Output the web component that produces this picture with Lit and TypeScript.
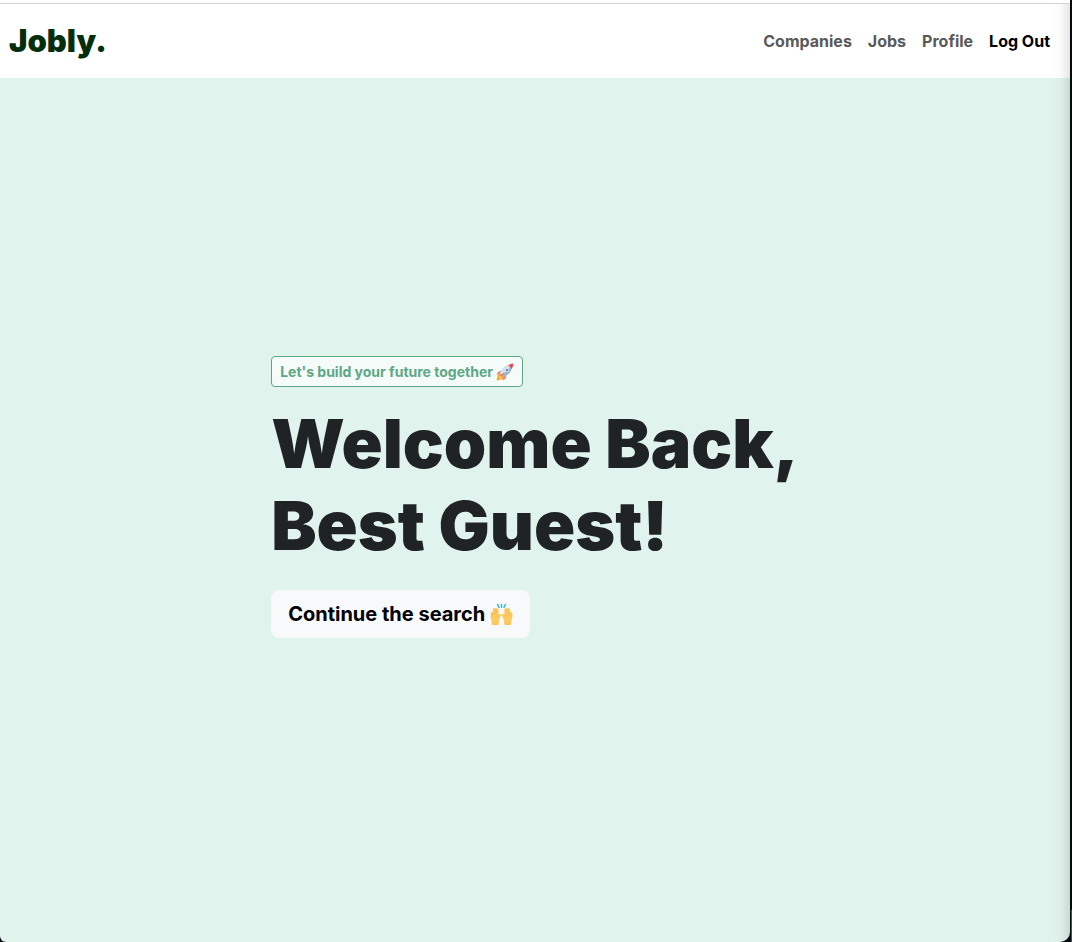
import { LitElement, html, css, svg } from "lit";
import { customElement } from "lit/decorators.js";

const rocket = svg`
  <path fill="#f7a12c" d="M1 31 3 22Q5 18 9 20L12 23Q14 27 10 29Z"/>
  <path fill="#ffd84d" d="M4 28 6 23Q8 21 10 24Q10 26 8 27Z"/>
  <path fill="#ed8b7c" d="M11 14 6 14Q2 16 1 21L8 20ZM18 21 18 26Q16 30 12 31L12 24Z"/>
  <path fill="#a3b3bf" d="M7 18Q12 7 23 3L29 9Q25 20 14 25Z"/>
  <path fill="#d5e2ea" d="M7 18Q12 7 23 3L26 6Q19 15 10 21Z"/>
  <path fill="#e8474e" d="M22 4Q26 1 31 1Q31 6 28 10Z"/>
  <circle cx="19.500" cy="12.500" r="3.400" fill="#e8f3fa"/>
  <circle cx="19.500" cy="12.500" r="2.300" fill="#4b95c6"/>
  <path stroke="#e8604f" stroke-width="2" stroke-linecap="round" d="M9 23 13 19"/>`;

const hand = svg`
  <path fill="#fbcb62" d="M1 14Q1 12 2 12Q3 12 3.500 14L4 9Q4 7 5.200 7Q6.300 7 6.500 8.500Q6.800 6.500 8 6.500Q9.200 6.500 9.400 8.500Q9.800 7 11 7.400Q12 7.800 12 9.500L12 16.500Q14 14.500 15.500 15.800Q16 16.500 15 18L12.500 24L12 30Q7 32 2.500 30L2 24Q0 20 1 14Z"/>
  <path fill="none" stroke="#eeb04c" stroke-width="0.700" d="M3.500 14V18M6.500 9V16M9.400 9V16M12 16.500Q10 18 9.500 21M3 29Q7 30.500 12 29"/>`;

const raisedHands = svg`
  ${hand}
  <g transform="translate(32 0) scale(-1 1)">${hand}</g>
  <path stroke="#35b7d6" stroke-width="2" stroke-linecap="round" d="M16 2V6M10.500 2 12.500 6M21.500 2 19.500 6"/>`;

@customElement("app-root")
export class AppRoot extends LitElement {
  static styles = css`
    :host {
      display: block;
      min-height: 100vh;
      background: linear-gradient(#03090f calc(100% - 32px), #1c5f86 calc(100% - 32px));
      font-family: Inter, "Liberation Sans", sans-serif;
      color: #1f2326;
    }
    .frame {
      background: #03090f;
      margin-right: 1px;
      padding-right: 1px;
    }
    .window {
      position: relative;
      display: flex;
      flex-direction: column;
      min-height: 100vh;
      overflow: hidden;
      border-radius: 0 0 10px 6px;
      background: #e0f3ec;
    }
    .window::after {
      content: "";
      position: absolute;
      inset: 4px 0 0 auto;
      width: 18px;
      pointer-events: none;
      background: linear-gradient(to right, transparent, rgba(0, 0, 0, 0.02) 50%, rgba(0, 0, 0, 0.1));
    }
    .edge {
      height: 3px;
      background: #fff;
      border-bottom: 1px solid #d4d4d5;
    }
    .navbar {
      display: flex;
      align-items: center;
      justify-content: space-between;
      height: 74px;
      padding: 0 12px 0 9px;
      background: #fff;
    }
    .brand {
      font-size: 31px;
      line-height: 48px;
      font-weight: 900;
      color: #052e0c;
      text-decoration: none;
    }
    .links {
      display: flex;
    }
    .link {
      padding: 8px;
      font-size: 16px;
      line-height: 24px;
      font-weight: 700;
      color: #595959;
      text-decoration: none;
    }
    .link.strong {
      color: #000;
    }
    .hero {
      flex: 1;
      display: flex;
      align-items: center;
      justify-content: center;
      padding-bottom: 26px;
    }
    .content {
      display: flex;
      flex-direction: column;
      align-items: flex-start;
    }
    .btn {
      display: flex;
      align-items: center;
      font-family: inherit;
      border: 1px solid;
      cursor: pointer;
    }
    .tag {
      gap: 3px;
      padding: 4px 8px;
      font-size: 14px;
      line-height: 21px;
      font-weight: 700;
      color: #5ea785;
      border-color: #5ea785;
      border-radius: 4px;
      background: #f5fbf9;
    }
    .continue {
      gap: 5px;
      padding: 8px 16px;
      font-size: 20px;
      line-height: 30px;
      font-weight: 700;
      color: #000;
      border-color: #f8f9fa;
      border-radius: 8px;
      background: #f8f9fa;
    }
    .tag svg {
      width: 18px;
      height: 18px;
    }
    .continue svg {
      width: 23px;
      height: 23px;
    }
    h1 {
      margin: 15px 0 24px;
      font-size: 68px;
      line-height: 82px;
      font-weight: 900;
    }
  `;

  render() {
    return html`
      <div class="frame">
        <div class="window">
          <div class="edge"></div>
          <nav class="navbar">
            <a class="brand" href="#">Jobly.</a>
            <div class="links">
              <a class="link" href="#companies">Companies</a>
              <a class="link" href="#jobs">Jobs</a>
              <a class="link" href="#profile">Profile</a>
              <a class="link strong" href="#logout">Log Out</a>
            </div>
          </nav>
          <main class="hero">
            <div class="content">
              <button class="btn tag" type="button">
                Let's build your future together
                <svg viewBox="0 0 32 32" aria-hidden="true">${rocket}</svg>
              </button>
              <h1>Welcome Back,<br />Best Guest!</h1>
              <button class="btn continue" type="button">
                Continue the search
                <svg viewBox="0 0 32 32" aria-hidden="true">${raisedHands}</svg>
              </button>
            </div>
          </main>
        </div>
      </div>
    `;
  }
}
